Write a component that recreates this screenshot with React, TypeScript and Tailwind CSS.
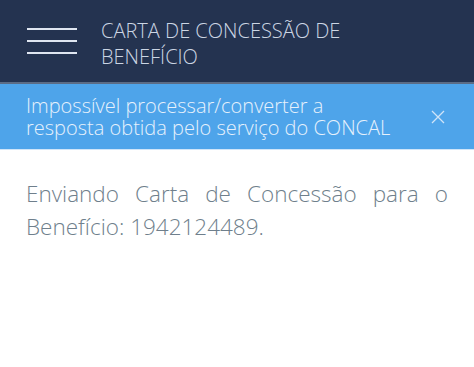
export default function App() {
  return (
    <div className="h-[367px] w-[474px] overflow-hidden bg-white font-['Open_Sans',sans-serif]">
      {/* top bar */}
      <header className="flex h-[84px] items-center border-b-2 border-[#5b6c86] bg-[#243350]">
        <div className="ml-[27px] flex w-[50px] flex-col gap-[10px]">
          <span className="h-[2px] bg-[#dfe6f1]"></span>
          <span className="h-[2px] bg-[#dfe6f1]"></span>
          <span className="h-[2px] bg-[#dfe6f1]"></span>
        </div>
        <h1 className="ml-[24px] pt-[6px] text-[20px] leading-[26px] font-light text-[#ccd6e4]">
          CARTA DE CONCESSÃO DE
          <br />
          BENEFÍCIO
        </h1>
      </header>

      {/* alert */}
      <div className="flex h-[66px] items-center justify-between border-b border-[#cfe5f9] bg-[#4ea4ea] pl-[26px] pr-[29px]">
        <p className="text-[20px] leading-[22px] font-light text-[#e6f1fc]">
          Impossível processar/converter a
          <br />
          resposta obtida pelo serviço do CONCAL
        </p>
        <svg width="14" height="14" viewBox="0 0 14 14" className="text-[#cfe4f8]">
          <path d="M1 1L13 13M13 1L1 13" stroke="currentColor" strokeWidth="1.3" />
        </svg>
      </div>

      {/* content */}
      <div className="px-[26px] pt-[27px]">
        <p className="text-justify text-[22.5px] leading-[33px] font-light text-[#6f7f8c]">
          Enviando Carta de Concessão para o Benefício: 1942124489.
        </p>
      </div>
    </div>
  );
}
